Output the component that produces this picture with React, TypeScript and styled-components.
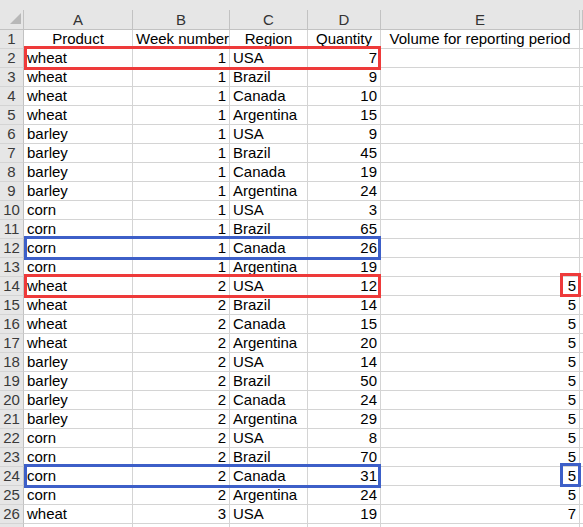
import React from "react";
import styled, { createGlobalStyle, css } from "styled-components";

const Global = createGlobalStyle`
  html, body { margin: 0; padding: 0; background: #ffffff; }
  body { overflow: hidden; }
`;

const COLS = "24px 109px 97px 78px 73px 199px 1fr";
const HEAD_BG = "#e6e6e6";
const GRID = "#d4d4d4";
const HEAD_LINE = "#c2c2c2";

const Sheet = styled.div`
  width: 583px;
  height: 527px;
  overflow: hidden;
  background: #fff;
  font-family: "Liberation Sans", Arial, sans-serif;
  font-size: 15px;
  color: #000;
`;

const HeaderBar = styled.div`
  display: grid;
  grid-template-columns: ${COLS};
  padding-top: 10px;
  background: ${HEAD_BG};
  border-bottom: 1px solid ${HEAD_LINE};
`;

const ColHead = styled.div`
  box-sizing: border-box;
  height: 19px;
  line-height: 19px;
  text-align: center;
  color: #333;
  border-right: 1px solid ${HEAD_LINE};
  position: relative;
`;

const Corner = styled(ColHead)`
  &::after {
    content: "";
    position: absolute;
    right: 2px;
    bottom: 5px;
    width: 0;
    height: 0;
    border-left: 11px solid transparent;
    border-bottom: 11px solid #b8b8b8;
  }
`;

const Row = styled.div`
  display: grid;
  grid-template-columns: ${COLS};
  height: 19px;
  position: relative;
`;

const RowHead = styled.div`
  box-sizing: border-box;
  background: ${HEAD_BG};
  color: #3a3a3a;
  text-align: center;
  line-height: 18px;
  border-right: 1px solid ${HEAD_LINE};
  border-bottom: 1px solid ${GRID};
`;

const Cell = styled.div<{ $align?: "left" | "right" | "center" }>`
  box-sizing: border-box;
  line-height: 18px;
  height: 19px;
  padding: 0 3px;
  white-space: nowrap;
  overflow: visible;
  text-align: ${(p) => p.$align || "left"};
  border-right: 1px solid ${GRID};
  border-bottom: 1px solid ${GRID};
`;

const Frame = styled.div<{ $color: "red" | "blue"; $small?: boolean }>`
  position: absolute;
  box-sizing: border-box;
  border: 3px solid ${(p) => (p.$color === "red" ? "#ee3a3a" : "#3d5fc8")};
  pointer-events: none;
  z-index: 2;
  ${(p) =>
    p.$small
      ? css`
          left: 560px;
          width: 21px;
          top: -4px;
          height: 24px;
        `
      : css`
          left: 24px;
          width: 357px;
          top: -3px;
          height: 24px;
        `}
`;

type Rec = [string, number, string, number, number | null];

const data: Rec[] = [
  ["wheat", 1, "USA", 7, null],
  ["wheat", 1, "Brazil", 9, null],
  ["wheat", 1, "Canada", 10, null],
  ["wheat", 1, "Argentina", 15, null],
  ["barley", 1, "USA", 9, null],
  ["barley", 1, "Brazil", 45, null],
  ["barley", 1, "Canada", 19, null],
  ["barley", 1, "Argentina", 24, null],
  ["corn", 1, "USA", 3, null],
  ["corn", 1, "Brazil", 65, null],
  ["corn", 1, "Canada", 26, null],
  ["corn", 1, "Argentina", 19, null],
  ["wheat", 2, "USA", 12, 5],
  ["wheat", 2, "Brazil", 14, 5],
  ["wheat", 2, "Canada", 15, 5],
  ["wheat", 2, "Argentina", 20, 5],
  ["barley", 2, "USA", 14, 5],
  ["barley", 2, "Brazil", 50, 5],
  ["barley", 2, "Canada", 24, 5],
  ["barley", 2, "Argentina", 29, 5],
  ["corn", 2, "USA", 8, 5],
  ["corn", 2, "Brazil", 70, 5],
  ["corn", 2, "Canada", 31, 5],
  ["corn", 2, "Argentina", 24, 5],
  ["wheat", 3, "USA", 19, 7],
];

const frames: Record<number, { color: "red" | "blue"; small?: boolean }> = {
  2: { color: "red" },
  12: { color: "blue" },
  14: { color: "red", small: true },
  24: { color: "blue", small: true },
};

export default function App() {
  return (
    <Sheet>
      <Global />
      <HeaderBar>
        <Corner />
        {["A", "B", "C", "D", "E"].map((c) => (
          <ColHead key={c}>{c}</ColHead>
        ))}
        <ColHead />
      </HeaderBar>
      <Row>
        <RowHead>1</RowHead>
        <Cell $align="center">Product</Cell>
        <Cell $align="center">Week number</Cell>
        <Cell $align="center">Region</Cell>
        <Cell $align="center">Quantity</Cell>
        <Cell $align="center">Volume for reporting period</Cell>
        <Cell />
      </Row>
      {data.map((r, i) => {
        const n = i + 2;
        const f = frames[n];
        return (
          <Row key={n}>
            <RowHead>{n}</RowHead>
            <Cell>{r[0]}</Cell>
            <Cell $align="right">{r[1]}</Cell>
            <Cell>{r[2]}</Cell>
            <Cell $align="right">{r[3]}</Cell>
            <Cell $align="right">{r[4] ?? ""}</Cell>
            <Cell />
            {f && <Frame $color={f.color} />}
            {f && f.small && <Frame $color={f.color} $small />}
          </Row>
        );
      })}
      <Row>
        <RowHead />
        <Cell />
        <Cell />
        <Cell />
        <Cell />
        <Cell />
        <Cell />
      </Row>
    </Sheet>
  );
}
